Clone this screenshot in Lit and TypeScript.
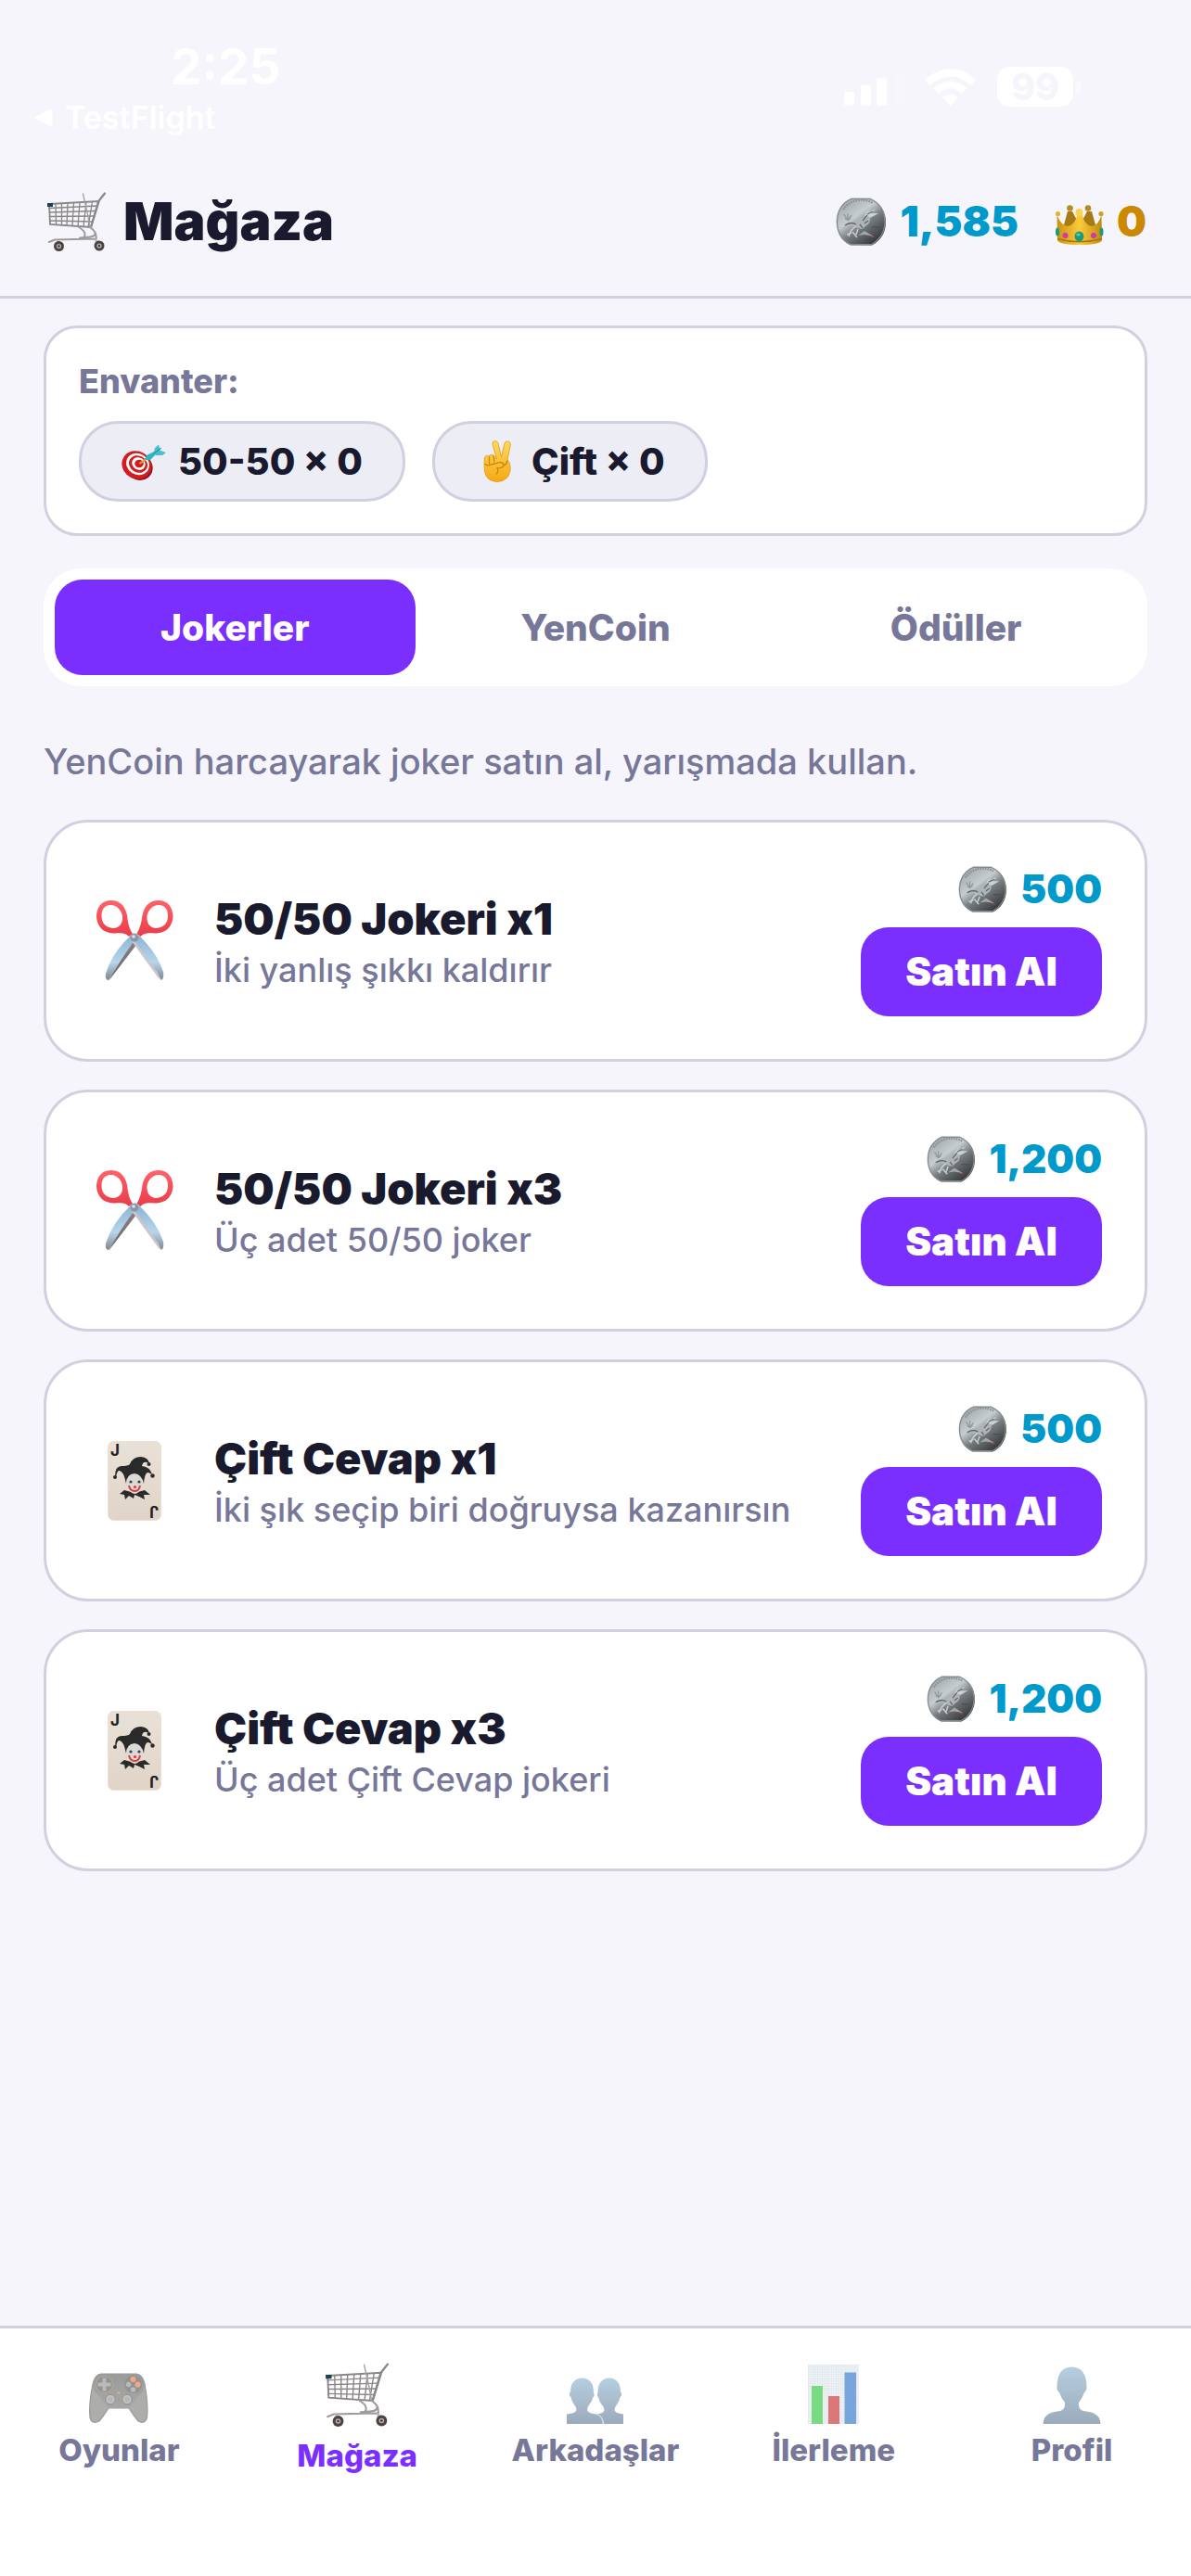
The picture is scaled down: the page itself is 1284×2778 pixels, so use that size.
import { LitElement, html, svg, css, nothing } from "lit";
import { customElement, property, state } from "lit/decorators.js";
import { classMap } from "lit/directives/class-map.js";

type IconName =
  | "cart" | "coin" | "crown" | "dart" | "victory"
  | "scissors" | "joker" | "gamepad" | "people" | "chart" | "person";

const cart = svg`
  <g fill="none" stroke="#8b8788" stroke-width="1.3" stroke-linecap="round">
    <path d="M3 13 L56 10 L48 38 L4 35 Z" stroke-width="1.8"/>
    <path d="M3 17.5 L55 15 M3.5 22 L53.5 20.5 M4 26.5 L52 26 M4 31 L50.5 32"/>
    <path d="M10 13 L10.5 35 M16.5 12.5 L16.5 35.5 M23 12 L22 36 M29.5 11.7 L28 36.5 M36 11.3 L34 37 M43 11 L40 37.5 M49.5 10.5 L45 37.8"/>
    <path d="M39.5 2 L44 22 L47 38" stroke="#a3a0a1"/>
  </g>
  <path d="M48 38 L57 9 L63 1.5" fill="none" stroke="#8a8788" stroke-width="2.2" stroke-linecap="round"/>
  <path d="M35 38 C45 44 42 50 36 50.5 M47 38 C54 43 54 46 53.5 53 M3 54 L9 51.5 L53 50.5 M36 49.5 L47 48.5 Q52 48 52.5 45" fill="none" stroke="#a19c9c" stroke-width="2" stroke-linecap="round"/>
  <rect x="1" y="12" width="6" height="4" fill="#1d4259"/>
  <path d="M10 51 L17 55 L14 59 Z M52 50 L59 55 L55 59 Z" fill="#c3b9b7"/>
  <circle cx="13.5" cy="58.5" r="5.5" fill="#4b4342"/><circle cx="13.5" cy="58.5" r="2.6" fill="#b9afac"/><circle cx="13.5" cy="58.5" r="1.2" fill="#3d3635"/>
  <circle cx="57" cy="58" r="5.5" fill="#4b4342"/><circle cx="57" cy="58" r="2.6" fill="#b9afac"/><circle cx="57" cy="58" r="1.2" fill="#3d3635"/>`;

const coin = svg`
  <defs>
    <linearGradient id="coinFace" x1="0.15" y1="0.1" x2="0.8" y2="0.95">
      <stop offset="0" stop-color="#a4aaad"/><stop offset="0.35" stop-color="#c6cdd1"/>
      <stop offset="0.58" stop-color="#777d80"/><stop offset="1" stop-color="#333638"/>
    </linearGradient>
  </defs>
  <path d="M17 0.5 H37 C48 5 54 15 54 26.5 C54 38 48 47 39 51.5 H16 C6 47 0.5 38 0.5 26.5 C0.5 15 6 5 17 0.5 Z" fill="url(#coinFace)"/>
  <path d="M17 1.5 H37 C47 6 53 15 53 26.5 C53 37 47 46 39 50.5 H16 C7 46 1.5 37 1.5 26.5 C1.5 15 7 6 17 1.5 Z" fill="none" stroke="#858a8d" stroke-width="1.2"/>
  <path d="M8 13 A24 24 0 0 1 40 6" fill="none" stroke="#8b9093" stroke-width="2.4" stroke-dasharray="1.6 1.2"/>
  <path d="M9 18 L13 25 M13 17 L13 25 M17 19 L13 25 M10 23 H16" stroke="#92989b" stroke-width="1.4"/>
  <path d="M30 23 Q32 15 38 11 L34 16 L44 12 L38 17 L46 17 L39 21 L36 22 Z" fill="#cdd1d3"/>
  <path d="M10 29 Q15 25 21 26 Q27 22 31 20 L37 21 Q38 28 32 31 L29 34 Q24 34 21 31 L14 31 Z" fill="#aeb4b7"/>
  <path d="M10 30 Q16 26 22 29" fill="none" stroke="#5b6063" stroke-width="1.2"/>
  <path d="M22 31 Q16 34 14 42 M18 37 L23 43 M17 38 L12 40 M24 34 L22 40" fill="none" stroke="#c8cdcf" stroke-width="1.6"/>
  <path d="M24 41 L31 36 L41 42 L31 40 Z" fill="#a2a7a9"/>
  <path d="M29 25 L34 19 M31 28 L35 25 M34 18 L40 15 M26 29 L29 33" stroke="#63686b" stroke-width="1.3"/>
  <path d="M39 32 H48" stroke="#4a4e50" stroke-width="1.2"/>
  <path d="M35 41 L41 43" stroke="#8a4b4b" stroke-width="1"/>`;

const crown = svg`
  <defs>
    <linearGradient id="crownGold" x1="0" x2="1"><stop offset="0" stop-color="#c8920f"/><stop offset="0.5" stop-color="#fccb3a"/><stop offset="1" stop-color="#bd8a10"/></linearGradient>
  </defs>
  <path d="M8 25 L13 7 H18 L26 22 L34 7 H39 L44 25 Z" fill="#a77a12"/>
  <circle cx="15.5" cy="3.5" r="3.3" fill="#b68c20"/><circle cx="35" cy="3.5" r="3.3" fill="#b68c20"/>
  <path d="M1.5 11 Q6 22 13 23 Q21 22 24 9 H28 Q31 22 39 23 Q46 22 49.5 11 L50 38 Q48 43 26 43 Q4 43 2 38 Z" fill="url(#crownGold)"/>
  <circle cx="25.5" cy="8" r="4" fill="#fcd34a"/><circle cx="2.5" cy="9.5" r="2.6" fill="#e6b32b"/><circle cx="49" cy="9.5" r="2.6" fill="#d39f20"/>
  <path d="M2 36.5 Q25 43 50 36.5" fill="none" stroke="#a87611" stroke-width="1.5"/>
  <ellipse cx="25.5" cy="34" rx="5" ry="5.4" fill="#179b78"/><ellipse cx="24.5" cy="32" rx="2.2" ry="1.6" fill="#5ad1ac"/>
  <circle cx="10.5" cy="33" r="3" fill="#d536ab"/><circle cx="41" cy="33" r="3" fill="#d536ab"/>
  <ellipse cx="2" cy="29" rx="2" ry="4.6" fill="#179b78"/><ellipse cx="49.5" cy="29" rx="2" ry="4.6" fill="#179b78"/>`;

const dart = svg`
  <ellipse cx="18.5" cy="24.5" rx="15.5" ry="14" transform="rotate(30 18.5 24.5)" fill="#8c0f12"/>
  <ellipse cx="16.5" cy="22.5" rx="16.5" ry="14.8" transform="rotate(30 16.5 22.5)" fill="#cf1d20"/>
  <ellipse cx="17.5" cy="21.5" rx="12.8" ry="11.3" transform="rotate(30 17.5 21.5)" fill="#fff"/>
  <ellipse cx="18" cy="21.5" rx="10.3" ry="9" transform="rotate(30 18 21.5)" fill="#cf1d20"/>
  <ellipse cx="18.5" cy="21" rx="7.5" ry="6.5" transform="rotate(30 18.5 21)" fill="#fff"/>
  <ellipse cx="19" cy="21" rx="4.8" ry="4.2" fill="#cf1d20"/>
  <path d="M19.5 21 L28 15" stroke="#e2a536" stroke-width="2"/>
  <path d="M25 17 L27 12 L37 7 L37 11 L31 17 Z" fill="#2fb6c3"/>
  <path d="M35 8 L36 4 L40 0.5 L42 7 L48 9 L44 12 L37 12 Z" fill="#45c0cd"/><path d="M35 10 L43 4" stroke="#27808c" stroke-width="1"/>`;

const victory = svg`
  <defs><linearGradient id="handSkin" x1="0" y1="0" x2="0" y2="1"><stop offset="0" stop-color="#ffdb59"/><stop offset="1" stop-color="#f5a914"/></linearGradient></defs>
  <path d="M14.5 20 L10 4 Q9.5 0.8 12.5 0.6 Q15 0.5 16 3 L19.5 18 L23 3 Q24 0.5 27 1 Q29.8 1.6 29.3 5 L26 21 Q30 25 29 33 Q27 44 15 44.5 Q3 44 1.5 33 Q0.5 25 1.5 18 Q3 15 6 17 Q8 14 11 16 Z" fill="url(#handSkin)" stroke="#e09a16" stroke-width="0.8"/>
  <path d="M6.5 18 V25 M2 25.5 Q5 28 8 26 L13 25 Q21 22 22 26 Q22 30 15 30 Q17 34 14 36 M22 27 Q25 26 26 22 M11 17 L12 23" fill="none" stroke="#cb8212" stroke-width="1.3" stroke-linecap="round"/>`;

const scissors = svg`
  <defs>
    <linearGradient id="bladeSteel" x1="0" y1="0" x2="0" y2="1"><stop offset="0" stop-color="#8fb4d6"/><stop offset="0.6" stop-color="#b5d6ea"/><stop offset="1" stop-color="#7e8690"/></linearGradient>
    <linearGradient id="bladeSide" x1="0" y1="0" x2="0" y2="1"><stop offset="0" stop-color="#8a7f84"/><stop offset="1" stop-color="#6b5f63"/></linearGradient>
    <linearGradient id="handleRed" x1="0" y1="0" x2="0" y2="1"><stop offset="0" stop-color="#ff626a"/><stop offset="1" stop-color="#e83c49"/></linearGradient>
  </defs>
  <path d="M37 38 L45 42 L13 86 Q9 86 10 79 Q17 56 37 38 Z" fill="url(#bladeSteel)"/>
  <path d="M39 46 L43 48 L13 87 Q24 67 39 46 Z" fill="url(#bladeSide)"/>
  <path d="M38 42 L46 38 Q65 56 72 77 Q73 84 70 86 Z" fill="url(#bladeSteel)"/>
  <path d="M38 44 L42 45 L66 78 L70 86 L67 84 Z" fill="#d0c6c9"/>
  <path d="M39 36 C35 30 34 24 33 16 C31 6 25 0 16 0 C5 0 0 8 0 18 C1 29 8 35 18 35.5 C26 35.5 30 34 35 39 Z M14 5 C21 4 27 10 28 17 C28.5 25 25 29 19 30 C11 30 5.5 25 5.5 17 C5.5 10 8 6 14 5 Z" fill="url(#handleRed)" fill-rule="evenodd"/>
  <path d="M43.5 36 C47 30 48.5 24 49.5 16 C51.5 6 57.5 0 66.5 0 C77.5 0 82.5 8 82.5 18 C81.5 29 74.5 35 64.5 35.5 C56.5 35.5 52.5 34 47.5 39 Z M68.5 5 C61.5 4 55.5 10 54.5 17 C54 25 57.5 29 63.5 30 C71.5 30 77 25 77 17 C77 10 74.5 6 68.5 5 Z" fill="url(#handleRed)" fill-rule="evenodd"/>
  <circle cx="41" cy="40" r="4.5" fill="#8797a8"/><circle cx="40" cy="39" r="1.8" fill="#dbe6ee"/>`;

const joker = svg`
  <defs><linearGradient id="cardFace" x1="0" y1="0" x2="0" y2="1"><stop offset="0" stop-color="#e9e1d8"/><stop offset="1" stop-color="#e0d4c7"/></linearGradient></defs>
  <rect x="0.5" y="0.5" width="57" height="85" rx="6" fill="url(#cardFace)" stroke="#f0dfd0"/>
  <text x="3" y="16" class="card-letter">J</text>
  <text x="3" y="16" class="card-letter" transform="rotate(180 29 43)">J</text>
  <path d="M18 53 L13 57 L18 58 L19 63 L23 59 L28 62 L29 58 L34 60 L40 63 L39 58 L46 58 L40 53 Q29 57 18 53 Z" fill="#2a2a2a"/>
  <path d="M19 37 Q29 31 39 38 L38 48 Q34 57 29 57 Q23 56 20 48 Z" fill="#dcdad5"/>
  <path d="M8 38 Q8 27 15 27 Q22 27 24 25 Q27 17 36 17 Q44 18 45 24 L42 23 Q38 22 37 27 Q46 28 48 36 L44 34 Q40 33 39 46 Q37 36 29 35 Q20 36 20 46 Q17 31 12 32 Q10 33 9 39 Z" fill="#2a2a2a"/>
  <circle cx="8" cy="39" r="2" fill="#2a2a2a"/><circle cx="44.5" cy="25" r="2" fill="#2a2a2a"/><circle cx="48.5" cy="37.5" r="2.2" fill="#2a2a2a"/>
  <circle cx="25" cy="44" r="1.6" fill="#33424e"/><circle cx="34" cy="44" r="1.6" fill="#33424e"/>
  <path d="M23 48 Q24 54 29.5 54 Q34 54 35 48" fill="none" stroke="#e2373c" stroke-width="1.9"/><circle cx="29.5" cy="49.5" r="1.6" fill="#e2373c"/>`;

const gamepad = svg`
  <defs><linearGradient id="padBody" x1="0" y1="0" x2="0" y2="1"><stop offset="0" stop-color="#585b5b"/><stop offset="1" stop-color="#6c6e6a"/></linearGradient></defs>
  <path d="M13 1 H51 Q58 2 60 12 Q64 34 62.5 48 Q60 56 53 52 Q48 46 43 38 H21 Q16 46 11 52 Q3 56 1 48 Q-0.5 34 4 12 Q6 2 13 1 Z" fill="#787a75" stroke="#565853" stroke-width="1.2"/>
  <path d="M13 1 H51 Q58 2 60 12 Q60 20 54 24 Q47 34 42 38 H22 Q17 34 10 24 Q4 20 4 12 Q6 2 13 1 Z" fill="url(#padBody)"/>
  <circle cx="16.5" cy="12.5" r="9" fill="#4b4d4c" stroke="#a46a44" stroke-width="1"/>
  <path d="M14.5 5.5 H18.5 V10.5 H23.5 V14.5 H18.5 V19.5 H14.5 V14.5 H9.5 V10.5 H14.5 Z" fill="#8b8d8b"/>
  <circle cx="47.5" cy="12.5" r="9.5" fill="#4b4d4c"/>
  <circle cx="47.5" cy="7" r="3" fill="#f4702e"/><circle cx="52.5" cy="12.5" r="3" fill="#f4702e"/>
  <circle cx="42.5" cy="12.5" r="2.8" fill="#8b8d8b"/><circle cx="47.5" cy="18" r="2.8" fill="#8b8d8b"/>
  <circle cx="32" cy="21.5" r="1.9" fill="#b66f42"/>
  <circle cx="23" cy="28.5" r="5.2" fill="#9c9e9b" stroke="#454746" stroke-width="1"/><circle cx="41" cy="28.5" r="5.2" fill="#9c9e9b" stroke="#454746" stroke-width="1"/>
  <circle cx="23" cy="28.5" r="3" fill="#868887"/><circle cx="41" cy="28.5" r="3" fill="#868887"/>`;

const bust = svg`
  <linearGradient id="bustBlue" x1="0" y1="0" x2="0" y2="1"><stop offset="0" stop-color="#87afc9"/><stop offset="1" stop-color="#58738f"/></linearGradient>`;

const people = svg`
  <defs>${bust}</defs>
  <path d="M0 50 V39.5 Q10 38.5 10.5 35 Q10.5 32 8 29 Q5 25 4.5 21 Q2.5 20 3 16 H4 Q4 1 16.5 0.5 Q29 1 29 16 Q30.5 20 28.5 21 Q27 26 24 29.5 Q22 32 22 35 Q23 38.5 31 39.5 Q38 41 39 50 Z" fill="url(#bustBlue)"/>
  <path d="M61 50 V39.5 Q52 38.5 51.5 35 Q51.5 32 54 29 Q57 25 57.5 21 Q59.5 20 59 16 H58 Q58 1 46 0.5 Q33.5 1 33.5 16 Q32 20 34 21 Q35 26 38 29.5 Q40.5 32 40.5 35 Q40 38.5 33 39.5 Q40 42 40 50 Z" fill="url(#bustBlue)"/>
  <path d="M31 39.5 Q38 41 39.5 48" fill="none" stroke="#8cb4cc" stroke-width="1"/>`;

const person = svg`
  <defs>${bust}</defs>
  <path d="M0.5 62 Q1 53 9 50 Q14 48.5 19 48 Q25 46 24 39 Q20 34 18 28 Q15 26 15.5 21 Q16 1 31.5 0.5 Q47 1 47.5 21 Q48 26 45 28 Q43 34 39 39 Q38 46 44 48 Q49 48.5 54 50 Q62 53 62.5 62 Z" fill="url(#bustBlue)"/>`;

const chart = svg`
  <defs><pattern id="chartGrid" width="2.5" height="2.5" patternUnits="userSpaceOnUse"><rect width="2.5" height="2.5" fill="#e3ecf1"/><path d="M0 0 H2.5 M0 0 V2.5" stroke="#c0cbd2" stroke-width="0.8"/></pattern></defs>
  <rect width="55" height="64" fill="url(#chartGrid)"/>
  <rect x="4" y="23" width="12" height="41" fill="#1fc22f"/><rect x="22" y="34" width="12" height="30" fill="#c41d1f"/><rect x="39.5" y="8.5" width="12.5" height="55.5" fill="#216bc8"/>`;

const ICONS: Record<IconName, { box: string; art: unknown }> = {
  cart: { box: "0 0 65 65", art: cart },
  coin: { box: "0 0 55 52", art: coin },
  crown: { box: "0 0 52 44", art: crown },
  dart: { box: "0 0 49 41", art: dart },
  victory: { box: "0 0 31 45", art: victory },
  scissors: { box: "0 0 83 88", art: scissors },
  joker: { box: "0 0 58 86", art: joker },
  gamepad: { box: "0 0 64 55", art: gamepad },
  people: { box: "0 0 61 50", art: people },
  chart: { box: "0 0 55 64", art: chart },
  person: { box: "0 0 63 62", art: person },
};

@customElement("shop-icon")
class ShopIcon extends LitElement {
  static styles = css`
    :host { display: block; flex: none; }
    .art { display: block; width: 100%; height: 100%; overflow: visible; }
    .card-letter { font: 700 17px Inter, "Liberation Sans", sans-serif; fill: #222; }
  `;
  @property() name: IconName = "coin";
  render() {
    const icon = ICONS[this.name];
    return html`<svg class="art" viewBox=${icon.box} aria-hidden="true">${icon.art}</svg>`;
  }
}

interface Product { icon: IconName; title: string; detail: string; price: string; }

const PRODUCTS: Product[] = [
  { icon: "scissors", title: "50/50 Jokeri x1", detail: "İki yanlış şıkkı kaldırır", price: "500" },
  { icon: "scissors", title: "50/50 Jokeri x3", detail: "Üç adet 50/50 joker", price: "1,200" },
  { icon: "joker", title: "Çift Cevap x1", detail: "İki şık seçip biri doğruysa kazanırsın", price: "500" },
  { icon: "joker", title: "Çift Cevap x3", detail: "Üç adet Çift Cevap jokeri", price: "1,200" },
];

@customElement("product-card")
class ProductCard extends LitElement {
  static styles = css`
    :host { display: block; }
    .card {
      display: flex; align-items: center; box-sizing: border-box;
      padding: 46px; border: 3px solid #d0d0e0; border-radius: 48px; background: #fff;
    }
    .picture { display: flex; justify-content: center; width: 98px; flex: none; margin-right: 37px; }
    .scissors { width: 83px; height: 88px; }
    .joker { width: 58px; height: 86px; }
    .about { flex: 1; min-width: 0; padding-top: 4px; }
    .title { margin: 0; font-size: 47px; line-height: 58px; font-weight: 900; color: #1a1a2e; }
    .detail { margin: 0; font-size: 36px; line-height: 52px; font-weight: 500; color: #777799; }
    .offer { display: flex; flex-direction: column; align-items: flex-end; gap: 16px; }
    .price { display: flex; align-items: center; gap: 14px; font-size: 42px; line-height: 51px; font-weight: 900; color: #0099cc; }
    .coin { width: 53px; height: 50px; }
    .buy {
      min-width: 260px; padding: 20px 40px; border: 0; border-radius: 30px; background: #7b2fff; color: #fff;
      font: 900 42px/56px Inter, "Liberation Sans", sans-serif; cursor: pointer;
    }
  `;
  @property({ attribute: false }) product!: Product;
  render() {
    const p = this.product;
    return html`
      <article class="card">
        <div class="picture"><shop-icon class=${p.icon} name=${p.icon}></shop-icon></div>
        <div class="about"><h2 class="title">${p.title}</h2><p class="detail">${p.detail}</p></div>
        <div class="offer">
          <div class="price"><shop-icon class="coin" name="coin"></shop-icon><span>${p.price}</span></div>
          <button class="buy" type="button">Satın Al</button>
        </div>
      </article>`;
  }
}

const TABS = ["Jokerler", "YenCoin", "Ödüller"];
const NAV: { icon: IconName; label: string }[] = [
  { icon: "gamepad", label: "Oyunlar" },
  { icon: "cart", label: "Mağaza" },
  { icon: "people", label: "Arkadaşlar" },
  { icon: "chart", label: "İlerleme" },
  { icon: "person", label: "Profil" },
];

@customElement("app-root")
class AppRoot extends LitElement {
  static styles = css`
    :host {
      display: flex; flex-direction: column; min-height: 100vh; background: #f5f5fb; color: #1a1a2e;
      font-family: Inter, "Liberation Sans", sans-serif;
    }
    .status { display: flex; justify-content: space-between; align-items: flex-start; padding: 42px 119px 0 36px; color: #fff; }
    .clock { padding-left: 148px; font-size: 53px; line-height: 60px; font-weight: 700; }
    .back { display: flex; align-items: center; gap: 12px; color: #fff; font-size: 34px; line-height: 50px; font-weight: 600; text-decoration: none; }
    .back-arrow { width: 22px; height: 22px; }
    .signals { display: flex; align-items: center; gap: 22px; padding-top: 30px; }
    .bars { width: 64px; height: 42px; }
    .wifi { width: 57px; height: 42px; }
    .battery { display: flex; align-items: center; gap: 3px; }
    .level { width: 82px; border-radius: 14px; background: #fff; color: #f5f5fb; font-size: 39px; line-height: 43px; font-weight: 800; text-align: center; }
    .tip { width: 5px; height: 14px; border-radius: 0 5px 5px 0; background: #fafafd; }
    .header { display: flex; justify-content: space-between; align-items: center; padding: 47px 48px 40px; border-bottom: 3px solid #d0d0e0; }
    .heading { display: flex; align-items: center; gap: 18px; margin: 0; font-size: 57px; line-height: 80px; font-weight: 900; }
    .heading-cart { width: 65px; height: 65px; margin-left: 2px; }
    .balances { display: flex; gap: 40px; font-size: 45px; line-height: 54px; font-weight: 900; }
    .balance { display: flex; align-items: center; gap: 14px; color: #0099cc; }
    .crowns { color: #cc8800; }
    .coin { width: 55px; height: 52px; }
    .crown { width: 52px; height: 44px; margin-top: 8px; }
    .content { flex: 1; padding: 29px 47px; }
    .inventory { padding: 33px 35px 34px; border: 3px solid #d0d0e0; border-radius: 36px; background: #fff; }
    .inventory-title { margin: 0 0 19px; font-size: 36px; line-height: 48px; font-weight: 800; color: #777799; }
    .chips { display: flex; gap: 29px; margin: 0; padding: 0; list-style: none; }
    .chip { display: flex; align-items: center; gap: 12px; padding: 0 43px; border: 3px solid #d0d0e0; border-radius: 42px; background: #ededf5; font-size: 40px; line-height: 81px; font-weight: 800; }
    .dart { width: 49px; height: 41px; margin-top: 4px; }
    .victory { width: 49px; height: 45px; }
    .tabs { display: grid; grid-template-columns: repeat(3, 1fr); gap: 0; margin-top: 35px; padding: 12px; border-radius: 40px; background: #fff; }
    .tab { padding: 26px 0; border: 0; border-radius: 30px; background: none; color: #777799; font: 800 39px/51px Inter, "Liberation Sans", sans-serif; cursor: pointer; }
    .tab-on { background: #7b2fff; color: #fff; }
    .note { margin: 54px 0 36px; font-size: 38px; line-height: 54px; font-weight: 500; color: #777799; }
    .products { display: grid; gap: 30px; }
    .nav { display: grid; grid-template-columns: repeat(5, 1fr); height: 267px; border-top: 3px solid #d0d0e0; background: #fff; }
    .nav-item { display: flex; flex-direction: column; align-items: center; padding-top: 37px; color: #777799; font-size: 33px; line-height: 44px; font-weight: 800; text-decoration: none; }
    .nav-picture { display: flex; align-items: flex-end; height: 66px; margin-bottom: 6px; opacity: 0.6; }
    .nav-on { color: #7b2fff; }
    .nav-on .nav-picture { height: 70px; margin-bottom: 8px; opacity: 1; }
    .gamepad { width: 64px; height: 55px; }
    .cart { width: 70px; height: 70px; }
    .people { width: 61px; height: 50px; }
    .chart { width: 55px; height: 64px; }
    .person { width: 63px; height: 62px; }
  `;

  @state() private tab = 0;

  render() {
    return html`
      <div class="status">
        <div>
          <div class="clock">2:25</div>
          <a class="back" href="#testflight">
            <svg class="back-arrow" viewBox="0 0 22 22" aria-hidden="true"><path d="M3 11 L19 3 V19 Z" fill="#fff" stroke="#fff" stroke-width="3" stroke-linejoin="round"/></svg>TestFlight</a>
        </div>
        <div class="signals">
          <svg class="bars" viewBox="0 0 64 42" aria-hidden="true" fill="#fff">
            <rect x="0" y="26" width="11" height="15" rx="3"/><rect x="18" y="19" width="11" height="22" rx="3"/>
            <rect x="35" y="11" width="11" height="30" rx="3"/><rect x="53" y="1" width="11" height="40" rx="3" opacity="0.2"/>
          </svg>
          <svg class="wifi" viewBox="0 0 57 42" aria-hidden="true" fill="#fff">
            <path d="M1 13 Q28.5 -11 56 13 L50.5 19 Q28.5 0 6.5 19 Z"/>
            <path d="M10.5 22 Q28.5 7 46.5 22 L41 28 Q28.5 17 16 28 Z"/>
            <path d="M20 32 Q28.5 25 37 32 L28.5 41 Z"/>
          </svg>
          <div class="battery"><span class="level">99</span><span class="tip"></span></div>
        </div>
      </div>

      <header class="header">
        <h1 class="heading"><shop-icon class="heading-cart" name="cart"></shop-icon>Mağaza</h1>
        <div class="balances">
          <span class="balance"><shop-icon class="coin" name="coin"></shop-icon>1,585</span>
          <span class="balance crowns"><shop-icon class="crown" name="crown"></shop-icon>0</span>
        </div>
      </header>

      <main class="content">
        <section class="inventory">
          <h2 class="inventory-title">Envanter:</h2>
          <ul class="chips">
            <li class="chip"><shop-icon class="dart" name="dart"></shop-icon>50-50 × 0</li>
            <li class="chip"><shop-icon class="victory" name="victory"></shop-icon>Çift × 0</li>
          </ul>
        </section>
        <div class="tabs" role="tablist">
          ${TABS.map((label, i) => html`
            <button type="button" role="tab" aria-selected=${i === this.tab}
              class=${classMap({ tab: true, "tab-on": i === this.tab })}
              @click=${() => (this.tab = i)}>${label}</button>`)}
        </div>
        <p class="note">YenCoin harcayarak joker satın al, yarışmada kullan.</p>
        <div class="products">
          ${PRODUCTS.map((p) => html`<product-card .product=${p}></product-card>`)}
        </div>
      </main>

      <nav class="nav">
        ${NAV.map((item) => html`
          <a href="#${item.icon}" aria-current=${item.icon === "cart" ? "page" : nothing}
            class=${classMap({ "nav-item": true, "nav-on": item.icon === "cart" })}>
            <span class="nav-picture"><shop-icon class=${item.icon} name=${item.icon}></shop-icon></span>${item.label}</a>`)}
      </nav>`;
  }
}
